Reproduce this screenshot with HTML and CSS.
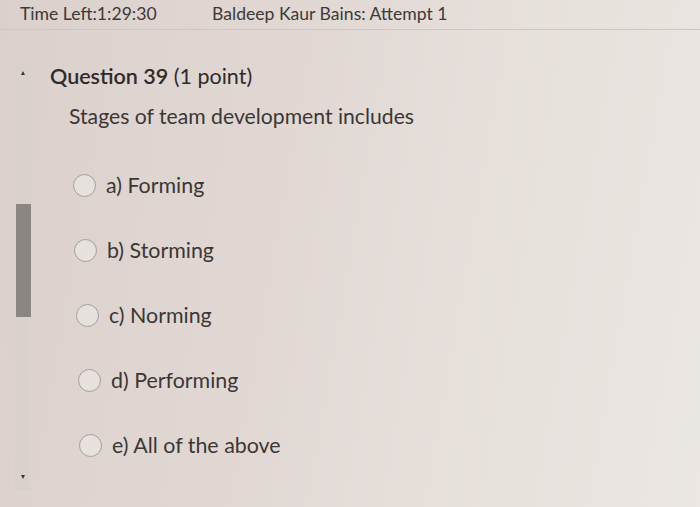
FILE: index.html
```html
<!DOCTYPE html>
<html>
<head>
<meta charset="utf-8">
<link rel="stylesheet" href="styles.css">
</head>
<body>
<div class="page">
  <header class="topbar">
    <span class="timer">Time Left:1:29:30</span>
    <span class="student">Baldeep Kaur Bains: Attempt 1</span>
  </header>
  <main class="content">
    <div class="scrollbar">
      <span class="arrow up"></span>
      <span class="thumb"></span>
      <span class="arrow down"></span>
    </div>
    <section class="question">
      <h1 class="qtitle"><b>Question 39</b> (1 point)</h1>
      <p class="qtext">Stages of team development includes</p>
      <ul class="options">
        <li class="opt o1"><span class="radio"></span>a) Forming</li>
        <li class="opt o2"><span class="radio"></span>b) Storming</li>
        <li class="opt o3"><span class="radio"></span>c) Norming</li>
        <li class="opt o4"><span class="radio"></span>d) Performing</li>
        <li class="opt o5"><span class="radio"></span>e) All of the above</li>
      </ul>
    </section>
  </main>
</div>
</body>
</html>
```

FILE: styles.css
```css
html, body {
  margin: 0;
  padding: 0;
}
body {
  width: 700px;
  height: 507px;
  overflow: hidden;
  font-family: Lato, "Open Sans", sans-serif;
  color: #3b3735;
  background: linear-gradient(100deg, #dbd0cc 0%, #e1d8d4 40%, #e8e2dd 75%, #ebe7e2 100%);
}
.page {
  height: 507px;
  display: flex;
  flex-direction: column;
}
.topbar {
  height: 30px;
  border-bottom: 1px solid #cfc6c2;
  display: flex;
  align-items: center;
  padding-left: 20px;
  font-size: 17.6px;
  color: #3d3937;
  box-sizing: border-box;
  padding-bottom: 2px;
}
.timer {
  width: 192px;
}
.content {
  display: flex;
  padding-top: 32px;
}
.scrollbar {
  width: 16px;
  height: 428px;
  margin-left: 15px;
  background: #d9d1cc;
  display: flex;
  flex-direction: column;
  align-items: center;
}
.arrow {
  width: 0;
  height: 0;
  border-left: 2.5px solid transparent;
  border-right: 2.5px solid transparent;
}
.arrow.up {
  border-bottom: 4px solid #3a3634;
  margin-top: 9px;
}
.arrow.down {
  border-top: 4px solid #3a3634;
  margin-top: 158px;
}
.thumb {
  width: 15px;
  height: 113px;
  background: #8c8682;
  margin-top: 129px;
}
.question {
  padding-left: 19px;
}
.qtitle {
  margin: 0;
  margin-top: 1px;
  font-size: 21.5px;
  font-weight: 400;
  line-height: 26px;
  color: #2f2b2a;
}
.qtitle b {
  font-weight: 600;
}
.qtext {
  margin: 14px 0 0 19px;
  font-size: 21.2px;
  line-height: 26px;
}
.options {
  list-style: none;
  margin: 44px 0 0 0;
  padding: 0;
}
.opt {
  display: flex;
  align-items: center;
  height: 24px;
  font-size: 21.4px;
  margin-bottom: 41px;
}
.o1 { margin-left: 23px; }
.o2 { margin-left: 24px; }
.o3 { margin-left: 26px; }
.o4 { margin-left: 28px; }
.o5 { margin-left: 29px; }
.radio {
  width: 21px;
  height: 21px;
  border: 1.5px solid #a49d99;
  border-radius: 50%;
  background: #e6e1dd;
  margin-right: 10px;
  flex: none;
}
```
